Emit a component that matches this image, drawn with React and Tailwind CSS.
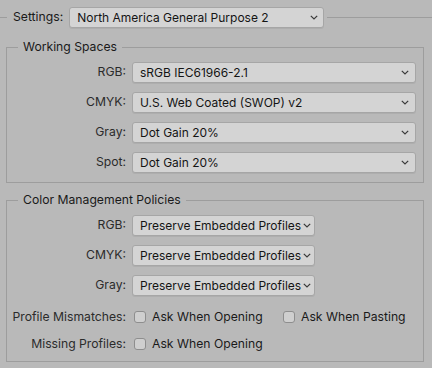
import React from 'react';

const Chevron = () => (
  <svg width="8" height="5" viewBox="0 0 8 5" className="shrink-0">
    <path d="M0.8 0.8 L4 4 L7.2 0.8" fill="none" stroke="#3a3a3a" strokeWidth="1.2" />
  </svg>
);

const Select = ({ value, width, pr = 'pr-[6px]' }) => (
  <div
    className={`flex items-center justify-between h-[21px] pl-[7px] bg-[#d4d4d4] border border-[#a6a6a6] rounded-[3px] shadow-[0_1px_0_rgba(0,0,0,0.06)] text-[#141414] text-[12px] ${pr} ${width}`}
  >
    <span className="whitespace-nowrap">{value}</span>
    <Chevron />
  </div>
);

const Checkbox = ({ label }) => (
  <div className="flex items-center gap-[6px]">
    <div className="w-[12px] h-[12px] rounded-[3px] border border-[#8e8e8e] bg-[#cfcfcf]"></div>
    <span className="text-[#1a1a1a]">{label}</span>
  </div>
);

const Row = ({ label, children }) => (
  <div className="flex items-center h-[21px]">
    <div className="w-[119px] text-right text-[#2b2b2b] whitespace-nowrap">{label}</div>
    <div className="ml-[6px] flex items-center">{children}</div>
  </div>
);

const Group = ({ title, children, className }) => (
  <fieldset className={`mx-[6px] w-[418px] border border-[#9d9d9d] pt-[7px] ${className}`}>
    <legend className="ml-[11px] px-[5px] leading-[16px] text-[#1a1a1a]">{title}</legend>
    {children}
  </fieldset>
);

const App = () => {
  const working = [
    { label: 'RGB:', value: 'sRGB IEC61966-2.1' },
    { label: 'CMYK:', value: 'U.S. Web Coated (SWOP) v2' },
    { label: 'Gray:', value: 'Dot Gain 20%' },
    { label: 'Spot:', value: 'Dot Gain 20%' },
  ];
  const policies = ['RGB:', 'CMYK:', 'Gray:'];

  return (
    <div className="w-[432px] h-[368px] overflow-hidden bg-[#b9b9b9] text-[12.2px] font-['Inter',sans-serif]">
      <div className="flex items-center h-[21px] mt-[7px]">
        <div className="w-[7px] h-px bg-[#9d9d9d]"></div>
        <span className="ml-[6px] text-[#1a1a1a]">Settings:</span>
        <div className="ml-[6px]">
          <Select value="North America General Purpose 2" width="w-[255px]" pr="pr-[5px]" />
        </div>
        <div className="flex-1 ml-[3px] h-px bg-[#9d9d9d]"></div>
      </div>

      <Group title="Working Spaces" className="mt-[11px] pb-[9px]">
        <div className="flex flex-col gap-[9px]">
          {working.map((w) => (
            <Row key={w.label} label={w.label}>
              <Select value={w.value} width="w-[284px]" />
            </Row>
          ))}
        </div>
      </Group>

      <Group title="Color Management Policies" className="mt-[9px] pb-[7px]">
        <div className="flex flex-col gap-[9px]">
          {policies.map((p) => (
            <Row key={p} label={p}>
              <Select value="Preserve Embedded Profiles" width="w-[183px]" pr="pr-[3px]" />
            </Row>
          ))}
        </div>
        <div className="flex flex-col gap-[7px] mt-[11px]">
          <div className="flex items-center h-[20px]">
            <div className="w-[119px] text-right text-[#2b2b2b] whitespace-nowrap">Profile Mismatches:</div>
            <div className="ml-[8px] w-[149px]">
              <Checkbox label="Ask When Opening" />
            </div>
            <Checkbox label="Ask When Pasting" />
          </div>
          <div className="flex items-center h-[20px]">
            <div className="w-[119px] text-right text-[#2b2b2b] whitespace-nowrap">Missing Profiles:</div>
            <div className="ml-[8px]">
              <Checkbox label="Ask When Opening" />
            </div>
          </div>
        </div>
      </Group>
    </div>
  );
};

export default App;
